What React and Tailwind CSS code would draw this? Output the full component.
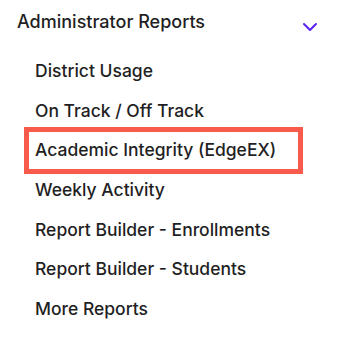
const items = [
  "District Usage",
  "On Track / Off Track",
  "Academic Integrity (EdgeEX)",
  "Weekly Activity",
  "Report Builder - Enrollments",
  "Report Builder - Students",
  "More Reports",
];

export default function App() {
  return (
    <div className="w-[339px] h-[338px] bg-white text-[#1f1f24] font-[Inter,sans-serif] font-[450]">
      <div className="flex items-start justify-between pl-[17px] pr-[21px] pt-[13px] h-[51px]">
        <span className="text-[18px] leading-none">Administrator Reports</span>
        <svg width="16" height="10" viewBox="0 0 16 10" fill="none" className="mt-[9px]">
          <path d="M2 2 L8 8 L14 2" stroke="#5b21f2" strokeWidth="2" strokeLinecap="round" strokeLinejoin="round" />
        </svg>
      </div>
      <ul className="flex flex-col">
        {items.map((t) => (
          <li key={t} className="h-[39.67px] flex items-center pl-[35px]">
            {t === "Academic Integrity (EdgeEX)" ? (
              <div className="-ml-[11px] w-[279px] h-[47px] shrink-0 border-[5px] border-[#f85a4b] flex items-center pl-[6px]">
                <span className="text-[17.5px] leading-none whitespace-nowrap">{t}</span>
              </div>
            ) : (
              <span className="text-[17.5px] leading-none whitespace-nowrap">{t}</span>
            )}
          </li>
        ))}
      </ul>
    </div>
  );
}
